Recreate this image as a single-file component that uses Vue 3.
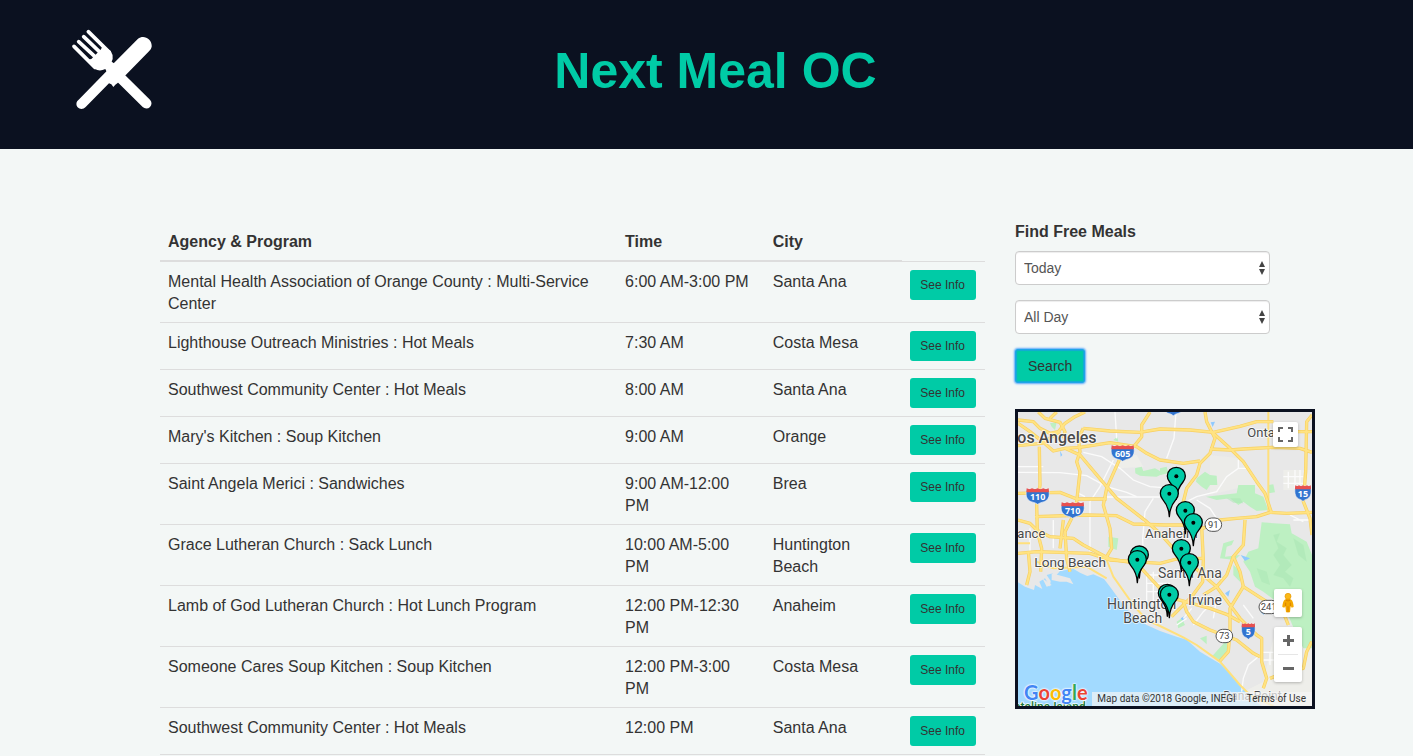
<script setup>
import { ref } from 'vue'

const day = ref('Today')
const time = ref('All Day')

const meals = [
  { name: 'Mental Health Association of Orange County : Multi-Service Center', time: '6:00 AM-3:00 PM', city: 'Santa Ana' },
  { name: 'Lighthouse Outreach Ministries : Hot Meals', time: '7:30 AM', city: 'Costa Mesa' },
  { name: 'Southwest Community Center : Hot Meals', time: '8:00 AM', city: 'Santa Ana' },
  { name: "Mary's Kitchen : Soup Kitchen", time: '9:00 AM', city: 'Orange' },
  { name: 'Saint Angela Merici : Sandwiches', time: '9:00 AM-12:00 PM', city: 'Brea' },
  { name: 'Grace Lutheran Church : Sack Lunch', time: '10:00 AM-5:00 PM', city: 'Huntington Beach' },
  { name: 'Lamb of God Lutheran Church : Hot Lunch Program', time: '12:00 PM-12:30 PM', city: 'Anaheim' },
  { name: 'Someone Cares Soup Kitchen : Soup Kitchen', time: '12:00 PM-3:00 PM', city: 'Costa Mesa' },
  { name: 'Southwest Community Center : Hot Meals', time: '12:00 PM', city: 'Santa Ana' }
]

const minorRoads = [
  'M24 185 H100 M24 202 L150 203 L230 212 L290 245 L350 262 L380 275',
  'M220 142 L275 155 L330 190 L370 225 L420 245 L460 248',
  'M315 21 L320 100 M310 165 L270 245 L240 290 L240 440',
  'M200 262 L225 275 M290 276 H455 M430 280 L405 320 L398 400 L400 470',
  'M498 21 L492 100 L470 160 M685 165 L685 190 L650 215 L620 260 L560 275 L530 290',
  'M685 190 L710 190 M560 285 L600 310 L620 340 M820 215 H880 M820 235 H880 M835 200 V250 M855 195 V250 M870 195 V250',
  'M410 500 V590 M410 510 H480 M410 535 H480 M410 560 H470 M430 500 V600',
  'M520 640 L545 610 M550 660 L580 620 L600 600 M500 660 L530 640',
  'M745 755 L715 780 L700 820 L695 860 M755 742 H790 M780 740 V780 M760 765 H800 M700 690 L720 670',
  'M620 580 L610 640 M700 600 L730 640 M60 370 V440 M130 345 V430 M840 330 L880 350 M850 345 H900'
]

const freeways = [
  'M24 45 L70 50 L90 70 L120 85 L145 80 L165 55 L195 35 L225 21',
  'M85 21 L105 40 L150 52 L165 80 L160 100 M120 40 L140 21',
  'M24 55 L60 80 L100 112 L130 138 L165 130 L210 127 L300 113 L380 125 L410 145 L450 165 L520 175 L570 168',
  'M24 122 L95 115 L150 80',
  'M220 70 L300 78 L390 82 L450 72 L540 75 L610 82 L690 64 L740 50 L790 50 M850 80 L906 80',
  'M88 125 L90 240 L80 300 L82 380 L95 430 L92 500',
  'M220 70 L205 100 L210 140 L200 170 L210 200 L200 290 L185 340 L165 380 L170 460 L180 500',
  'M165 130 L210 150 L290 245 L320 280 L410 350 L450 385 L490 430 L590 520 L620 545 L660 600 L690 640 L740 690 L755 700 L755 770 L770 820 L760 850',
  'M420 21 L395 60 L395 95 L375 120 L330 160 L290 250 L280 300 L300 370 L305 430 L290 455',
  'M24 265 L150 262 L200 282 L290 282',
  'M75 335 L230 330 L320 332 L370 357 L465 360 L560 360 L580 370 L630 345 L680 340 L740 335 L780 322 L830 325 L906 322',
  'M24 345 L60 355 L80 375 L120 395 L190 400 L220 420 L300 462 L380 475 L450 550 L490 580 L600 610 L650 628 L690 650',
  'M24 445 L80 440 L240 445 L300 465 L450 475 L500 462 L580 460',
  'M585 21 L590 50 L615 100 L600 145 L570 175 L560 210 L530 250 L520 290 L530 360',
  'M605 80 L660 130 L700 170 L740 230 L765 265 L785 325',
  'M600 132 L660 135 L700 132 L790 127 L870 130 L906 142',
  'M906 30 L890 50 L887 200 L880 290 L900 340 L906 390',
  'M705 345 L700 420 L670 455 L690 500 L700 545 L770 590 L800 605 L825 635 L835 660',
  'M575 365 L580 465 L578 530 L545 575 L485 635',
  'M670 455 L650 510 L620 545 L580 570',
  'M700 545 L660 610 L660 680 L655 740 L630 768',
  'M520 590 L530 620 L550 650 L600 675 L680 705 L730 745 L750 755',
  'M905 710 L890 740 L880 790 L830 800 L780 820',
  'M160 345 L150 430 M55 440 L60 500 L50 540'
]

const sideRoads = [
  'M775 21 V320',
  'M24 415 H60 M95 375 L100 400',
  'M290 465 L310 515 L370 600 L410 645 L450 663 L520 697 L560 720 L630 770 L690 840 L720 870 L790 903',
  'M80 470 L130 490 L230 485 L290 520'
]

const interstates = [
  { x: 338, y: 145, label: '605', w: 68 },
  { x: 83, y: 274, label: '110', w: 68 },
  { x: 188, y: 316, label: '710', w: 68 },
  { x: 879, y: 265, label: '15', w: 48 },
  { x: 715, y: 679, label: '5', w: 40 },
  { x: 490, y: 8, label: '', w: 60 }
]

const routes = [
  { x: 610, y: 359, label: '91', w: 50 },
  { x: 643, y: 693, label: '73', w: 50 },
  { x: 776, y: 606, label: '241', w: 58 }
]

const places = [
  { x: 22, y: 115, size: 48, label: 'os Angeles', strong: true },
  { x: 712, y: 97, size: 39, label: 'Onta' },
  { x: 22, y: 398, size: 39, label: 'ance' },
  { x: 405, y: 400, size: 40, label: 'Anaheim' },
  { x: 73, y: 486, size: 41, label: 'Long Beach' },
  { x: 444, y: 518, size: 42, label: 'Santa Ana' },
  { x: 534, y: 600, size: 42, label: 'Irvine' },
  { x: 291, y: 613, size: 42, label: 'Huntington' },
  { x: 340, y: 655, size: 42, label: 'Beach' },
  { x: 640, y: 884, size: 36, label: 'Dana Point' }
]

const pins = [
  [499, 214], [478, 266], [526, 317], [550, 353], [514, 431], [538, 473],
  [388, 450], [382, 464], [472, 565], [478, 569]
]
</script>

<template>
  <div class="page">
    <header class="masthead">
      <svg class="logo" viewBox="60 50 252 252" aria-label="Fork and knife" role="img">
        <g fill="none" stroke="#fff" stroke-linecap="round">
          <path stroke-width="11" d="M115 64L178 126M101 79L148 124M86 94L134 138M72 108L135 171" />
          <path stroke-width="31" d="M195 186L289 279" />
        </g>
        <path fill="#fff" d="M158 106L182 122Q190 133 188 146L185 154L194 160L170 184L166 176Q148 185 134 175L112 148L124 146L153 117Z" />
        <path fill="#fff" d="M264 85C281 72 307 85 305 109Q304 117 297 123L228 193L202 219L196 223L190 230L184 222L177 219L107 290C96 302 75 294 80 276Q81 272 86 268L168 184L180 170Z" />
      </svg>
      <h1>Next Meal OC</h1>
    </header>

    <main class="content">
      <table class="meals">
        <colgroup>
          <col class="c-agency"><col class="c-time"><col class="c-city"><col class="c-info">
        </colgroup>
        <thead>
          <tr>
            <th scope="col">Agency &amp; Program</th>
            <th scope="col">Time</th>
            <th scope="col">City</th>
          </tr>
        </thead>
        <tbody>
          <tr v-for="(meal, i) in meals" :key="i">
            <td>{{ meal.name }}</td>
            <td>{{ meal.time }}</td>
            <td>{{ meal.city }}</td>
            <td class="action"><button type="button" class="info">See Info</button></td>
          </tr>
        </tbody>
      </table>

      <aside class="side">
        <form class="finder" @submit.prevent>
          <label class="caption" for="day">Find Free Meals</label>
          <div class="picker">
            <select id="day" v-model="day">
              <option>Today</option>
              <option>Tomorrow</option>
            </select>
            <svg viewBox="0 0 8 14" aria-hidden="true"><path d="M4 0L7 6H1ZM4 14L7 8H1Z" /></svg>
          </div>
          <div class="picker">
            <select id="time" v-model="time" aria-label="Time of day">
              <option>All Day</option>
              <option>Morning</option>
            </select>
            <svg viewBox="0 0 8 14" aria-hidden="true"><path d="M4 0L7 6H1ZM4 14L7 8H1Z" /></svg>
          </div>
          <button type="submit" class="search">Search</button>
        </form>

        <section class="map" aria-label="Map of meal locations">
          <svg class="canvas" viewBox="24 21 882 882">
            <rect x="24" y="21" width="882" height="882" fill="#e8e8e8" />
            <g fill="#eeeeea">
              <path d="M600 150L690 160L780 270L720 240L600 270Z" opacity=".6" />
              <path d="M820 195H906V255H820ZM320 150L380 150L400 185L330 190Z" />
              <path d="M790 700L906 690V903H720L700 860L760 830Z" />
            </g>
            <g fill="#bdf0c2">
              <path d="M375 190L395 185L400 198L435 190L462 205L440 215L410 214L390 212L376 205Z" />
              <path d="M560 220L585 200L600 210L620 212L622 240L600 240L590 255L575 245L558 230Z" />
              <path d="M588 275L680 265L685 240L735 240L735 265L760 275L775 315L740 318L720 305L700 290L685 300L660 280L620 285Z" />
              <path d="M775 240L790 238L795 262L775 265Z" />
              <path d="M755 352L840 358L845 385L890 410L906 450V730L880 730L860 690L830 620L800 590L760 560L735 545L720 500L700 470L715 440L745 430Z" />
              <path d="M640 415L672 405L665 420L650 425L645 455L690 450L675 465L630 460Z" />
              <path d="M120 55L140 52L135 75L125 65ZM295 395L325 400L320 435L295 425ZM310 105L322 95L325 110Z" />
              <path d="M605 755L650 705L652 735L632 765ZM500 650L515 640L525 660L505 670ZM570 700L590 692L590 718ZM560 575L585 595L570 600Z" />
              <path d="M670 480L692 500L690 530L670 510ZM450 190L470 185L475 205L450 210Z" />
            </g>
            <g fill="#a9e6b4" opacity=".5">
              <path d="M790 390L810 385L800 410L830 430L820 450L845 480L825 500L850 520L840 545L820 520L790 510L810 480L790 450L805 430Z" />
              <path d="M850 400L880 420L890 470L865 450ZM740 490L770 500L780 540L755 530ZM650 280L690 280L700 295L670 293Z" />
            </g>
            <path fill="#a2daff" d="M24 532L45 545L72 555L75 540L97 552L88 530L105 520L120 545L122 528L110 510L128 505L135 515L150 498L190 491L210 503L232 513L250 508L282 522L300 545L325 580L350 612L380 640L410 660L450 678L500 695L530 704L570 740L630 776L668 812L695 848L725 880L755 903H24Z" />
            <g fill="#e8e8e8"><path d="M125 505L180 520L190 538L170 530L150 530L125 525ZM97 520L125 540L110 545Z" /></g>
            <g fill="#8fcaff"><path d="M150 137L157 150L152 155ZM602 52L615 50L608 66ZM692 450L720 460L705 468ZM645 565L660 555L655 575ZM750 620L765 610L762 630ZM512 640L525 632L520 650Z" /></g>
            <g fill="none" stroke="#fbfbfb" stroke-width="4"><path v-for="d in minorRoads" :key="d" :d="d" /></g>
            <g fill="none" stroke="#ffe07c" stroke-width="6" stroke-linejoin="round"><path v-for="d in sideRoads" :key="d" :d="d" /></g>
            <g fill="none" stroke="#f8d063" stroke-width="10" stroke-linejoin="round"><path v-for="d in freeways" :key="d" :d="d" /></g>
            <g fill="none" stroke="#ffe382" stroke-width="6" stroke-linejoin="round"><path v-for="d in freeways" :key="d" :d="d" /></g>

            <g v-for="s in interstates" :key="s.x" :transform="`translate(${s.x} ${s.y})`">
              <path :transform="`scale(${s.w / 68} 1)`" fill="#3174d0" stroke="#f5f5f5" stroke-width="2" d="M-32 -22H32C38 -5 34 10 20 16Q6 19 0 24Q-6 19 -20 16C-34 10 -38 -5 -32 -22Z" />
              <path :transform="`scale(${s.w / 68} 1)`" fill="#e8504f" d="M-33 -24Q-24 -19 -17 -24Q-8 -19 0 -24Q8 -19 17 -24Q24 -19 33 -24L34 -12H-34Z" />
              <text v-if="s.label" class="shield" y="12" text-anchor="middle">{{ s.label }}</text>
            </g>
            <g v-for="r in routes" :key="r.label" :transform="`translate(${r.x} ${r.y})`">
              <rect :x="-r.w / 2" y="-20" :width="r.w" height="40" rx="20" fill="#fff" stroke="#555" stroke-width="3" />
              <text class="route" y="10" text-anchor="middle">{{ r.label }}</text>
            </g>
            <text v-for="p in places" :key="p.label" class="place" :class="{ strong: p.strong }" :x="p.x" :y="p.y" :font-size="p.size">{{ p.label }}</text>
            <text class="island" x="12" y="917">atalina Island</text>

            <g v-for="(p, i) in pins" :key="'pin' + i" :transform="`translate(${p[0]} ${p[1]})`">
              <path fill="#00cba6" stroke="#000" stroke-width="4" stroke-linejoin="round" d="M0 69C-1 42 -9 30 -20 17C-25 11 -27 5 -27 -1C-27 -16 -15 -27 0 -27S27 -16 27 -1C27 5 25 11 20 17C9 30 1 42 0 69Z" />
              <circle r="6" />
            </g>
          </svg>

          <div class="google" aria-label="Google"><i class="b">G</i><i class="r">o</i><i class="y">o</i><i class="b">g</i><i class="g">l</i><i class="r">e</i></div>
          <div class="legal"><span>Map data ©2018 Google, INEGI</span><a href="#">Terms of Use</a></div>

          <button type="button" class="ctl full" aria-label="Toggle fullscreen">
            <svg viewBox="0 0 15 15" width="15" height="15"><path fill="none" stroke="#666" stroke-width="2" d="M1 5V1H5M10 1H14V5M14 10V14H10M5 14H1V10" /></svg>
          </button>
          <button type="button" class="ctl man" aria-label="Street View">
            <svg viewBox="0 0 36 60" width="12" height="20">
              <path fill="#f5a800" d="M8 20Q18 15 28 20Q34 25 35 42L29 44L26 38L24 58H12L10 38L7 44L1 42Q2 25 8 20Z" />
              <circle cx="18" cy="10" r="9" fill="#fbb917" stroke="#e69300" stroke-width="2" />
              <path stroke="#d98200" stroke-width="3" fill="none" d="M11 21Q18 27 25 21M18 40V58M11 29V40M25 29V40" />
            </svg>
          </button>
          <div class="ctl zoom">
            <button type="button" aria-label="Zoom in"><svg viewBox="0 0 22 22" width="11" height="11"><path stroke="#666" stroke-width="6" d="M0 11H22M11 0V22" /></svg></button>
            <button type="button" aria-label="Zoom out"><svg viewBox="0 0 22 22" width="11" height="11"><path stroke="#666" stroke-width="6" d="M0 11H22" /></svg></button>
          </div>
        </section>
      </aside>
    </main>
  </div>
</template>

<style>
body {
  background: #f3f7f6;
}
</style>

<style scoped>
.page {
  font-family: "Liberation Sans", Arial, sans-serif;
  font-size: 16px;
  line-height: 22px;
  color: #333;
}
.page * {
  box-sizing: border-box;
}
button,
select {
  font-family: inherit;
  margin: 0;
}
.masthead {
  display: grid;
  grid-template-columns: 1fr auto 1fr;
  align-items: center;
  padding: 27px 52px 38px 70px;
  background: #0b1120;
}
.logo {
  display: block;
  width: 84px;
  height: 84px;
}
h1 {
  margin: 0;
  padding-top: 4px;
  font-size: 50px;
  line-height: 56px;
  font-weight: 700;
  color: #00cba6;
}
.content {
  display: grid;
  grid-template-columns: 1fr 300px;
  column-gap: 30px;
  align-items: start;
  padding: 72px 98px 0 160px;
}
.meals {
  width: 100%;
  margin-top: 1px;
  table-layout: fixed;
  border-collapse: collapse;
}
.c-agency { width: 55.4%; }
.c-time { width: 17.9%; }
.c-city { width: 16.6%; }
.c-info { width: 10.1%; }
th,
td {
  padding: 9px 8px 7px;
  text-align: left;
  vertical-align: top;
}
.action {
  padding: 8px;
}
th {
  border-bottom: 2px solid #ddd;
}
td {
  border-top: 1px solid #ddd;
}
tbody tr:last-child td {
  border-bottom: 1px solid #ddd;
}
.info {
  display: block;
  width: 66px;
  height: 30px;
  padding: 0;
  border: 0;
  border-radius: 3px;
  background: #00cba6;
  color: #333;
  font-size: 12px;
  line-height: 18px;
}
.caption {
  display: block;
  margin-bottom: 8px;
  font-weight: 700;
}
.picker {
  position: relative;
  width: 85%;
  margin-bottom: 15px;
}
.picker select {
  display: block;
  appearance: none;
  width: 100%;
  height: 34px;
  padding: 6px 8px;
  border: 1px solid #ccc;
  border-radius: 4px;
  background: #fff;
  box-shadow: inset 0 1px 1px rgba(0, 0, 0, 0.075);
  color: #555;
  font-size: 14px;
  line-height: 20px;
}
.picker svg {
  position: absolute;
  right: 4px;
  top: 10px;
  width: 8px;
  height: 14px;
  fill: #444;
  pointer-events: none;
}
.search {
  display: block;
  padding: 6px 12px;
  border: 1px solid #1fa4e8;
  border-radius: 3px;
  background: #00cba6;
  box-shadow: 0 0 2px 1px #5aa9fa, inset 0 0 1px 1px #14a9d8;
  color: #333;
  font-size: 14px;
  line-height: 20px;
}
.map {
  position: relative;
  margin-top: 26px;
  border: 3px solid #0b1120;
  overflow: hidden;
  font-family: Roboto, sans-serif;
}
.canvas {
  display: block;
  width: 100%;
}
.place {
  fill: #4a4a4a;
  stroke: #fff;
  stroke-width: 5px;
  stroke-opacity: 0.8;
  paint-order: stroke;
}
.strong {
  font-weight: 500;
}
.shield {
  fill: #fff;
  font-family: "Open Sans", sans-serif;
  font-weight: 700;
  font-size: 27px;
}
.route {
  fill: #444;
  font-size: 28px;
}
.island {
  fill: #1d7a3a;
  font-size: 36px;
  font-weight: 500;
  stroke: #fff;
  stroke-width: 4px;
  paint-order: stroke;
}
.google {
  position: absolute;
  left: 6px;
  bottom: 2px;
  font-family: Lato, sans-serif;
  font-size: 20px;
  line-height: 24px;
  font-weight: 700;
  text-shadow: 0 0 2px #fff, 0 0 2px #fff, 0 0 2px #fff;
}
.google i { font-style: normal; }
.b { color: #4285f4; }
.r { color: #ea4335; }
.y { color: #fbbc05; }
.g { color: #34a853; }
.legal {
  position: absolute;
  right: 0;
  bottom: 0;
  display: flex;
  gap: 11px;
  padding: 0 6px 0 5px;
  background: rgba(245, 245, 245, 0.7);
  font-size: 10px;
  line-height: 14px;
  white-space: nowrap;
  color: #333;
}
.legal a {
  color: inherit;
  text-decoration: none;
}
.ctl {
  position: absolute;
  display: flex;
  align-items: center;
  justify-content: center;
  padding: 0;
  border: 0;
  border-radius: 2px;
  background: #fff;
  box-shadow: 0 1px 3px rgba(0, 0, 0, 0.25);
}
.full {
  top: 10px;
  right: 14px;
  width: 25px;
  height: 25px;
}
.man {
  right: 10px;
  bottom: 89px;
  width: 28px;
  height: 28px;
}
.zoom {
  right: 10px;
  bottom: 24px;
  width: 28px;
  flex-direction: column;
}
.zoom button {
  display: flex;
  align-items: center;
  justify-content: center;
  width: 20px;
  height: 27px;
  padding: 0;
  border: 0;
  background: none;
}
.zoom button + button {
  height: 28px;
  border-top: 1px solid #e6e6e6;
}
</style>
